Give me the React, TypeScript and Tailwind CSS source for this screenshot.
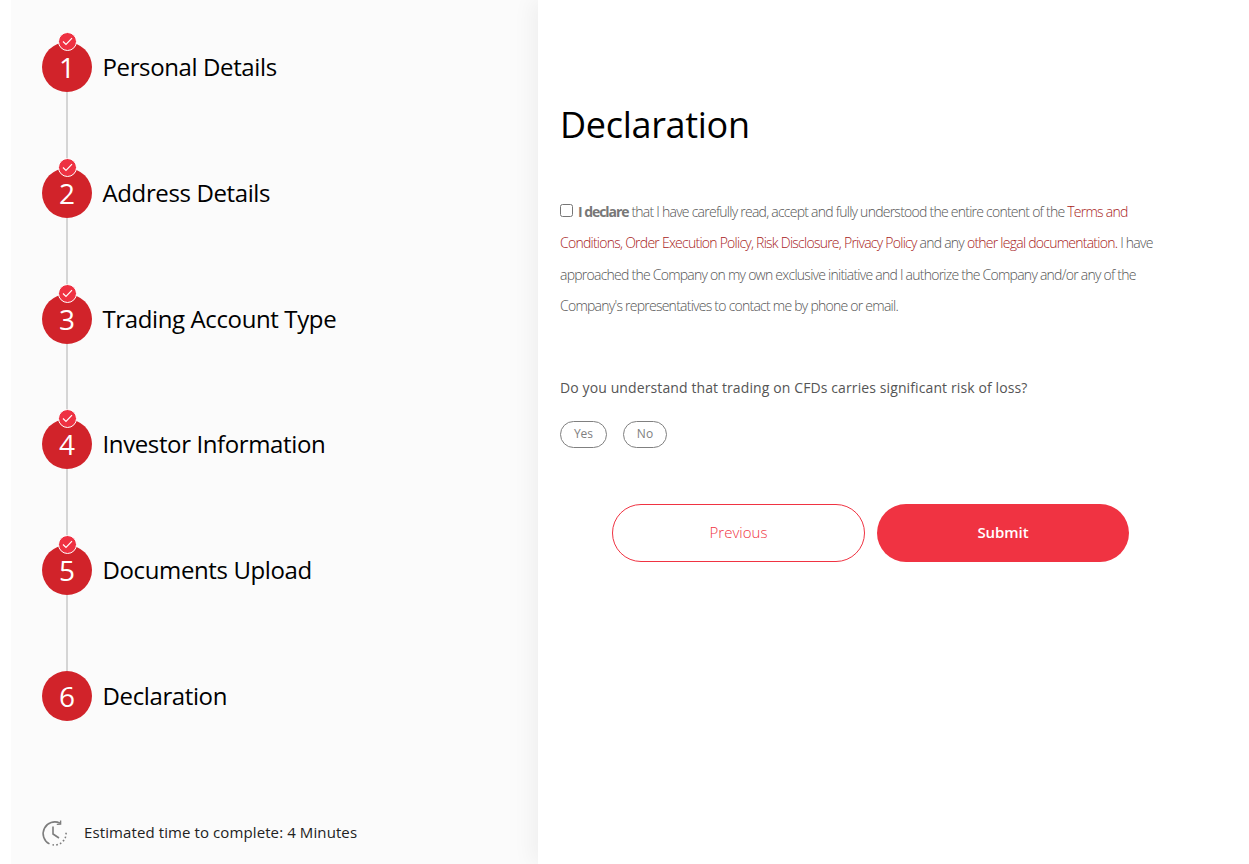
import React from "react";

const steps = [
  { n: 1, label: "Personal Details", done: true },
  { n: 2, label: "Address Details", done: true },
  { n: 3, label: "Trading Account Type", done: true },
  { n: 4, label: "Investor Information", done: true },
  { n: 5, label: "Documents Upload", done: true },
  { n: 6, label: "Declaration", done: false },
];

function Check() {
  return (
    <span className="absolute left-[16px] top-[-10px] flex h-[19px] w-[19px] items-center justify-center rounded-full border border-white bg-[#ee3142]">
      <svg width="11" height="9" viewBox="0 0 11 9" fill="none">
        <path d="M1 4.5 L4 7.5 L10 1.2" stroke="#fff" strokeWidth="1.2" />
      </svg>
    </span>
  );
}

function Clock() {
  return (
    <svg width="28" height="28" viewBox="0 0 28 28" fill="none" stroke="#7d7d7d">
      <path d="M20 4.2 A11.5 11.5 0 1 0 9.5 24.9" strokeWidth="1.6" />
      <path d="M20.6 1.5 L20.6 5.2 L16.8 5.4" strokeWidth="1.4" />
      <path d="M13 7.5 V15 L19 19" strokeWidth="1.6" />
      <path d="M12.5 25.8 A11.5 11.5 0 0 0 25.8 12" strokeWidth="1.6" strokeDasharray="1.6 2.2" />
    </svg>
  );
}

export default function App() {
  return (
    <div className="flex h-[864px] overflow-hidden bg-white font-['Open_Sans',sans-serif]">
      <aside className="ml-[11px] flex w-[527px] shrink-0 flex-col bg-[#fbfbfb] pl-[31px] pt-[42px]">
        <div className="flex flex-col">
          {steps.map((s, i) => (
            <div key={s.n} className="flex flex-col">
              <div className="flex h-[50px] items-center">
                <div className="relative flex h-[50px] w-[50px] items-center justify-center rounded-full bg-[#d1232a] text-[28px] leading-none text-white">
                  {s.n}
                  {s.done && <Check />}
                </div>
                <span className="ml-[10.5px] text-[24px] leading-none tracking-[-0.38px] text-black">{s.label}</span>
              </div>
              {i < steps.length - 1 && <div className="ml-[24px] h-[75.8px] w-[2px] bg-[#d5d5d5]" />}
            </div>
          ))}
        </div>
        <div className="mt-[98px] flex items-center">
          <span className="-ml-[2px]"><Clock /></span>
          <span className="ml-[16px] text-[15px] leading-none tracking-[0.1px] text-[#222]">Estimated time to complete: 4 Minutes</span>
        </div>
      </aside>
      <main className="relative flex-1 bg-white pl-[22px] pt-[101px] shadow-[-6px_0_20px_rgba(0,0,0,0.05)]">
        <h1 className="text-[36px] font-normal leading-[48px] tracking-[-0.3px] text-black">Declaration</h1>
        <p className="mt-[47px] w-[600px] text-[14px] font-light leading-[31.4px] tracking-[-0.75px] text-[#555]">
          <input type="checkbox" className="mr-[5px] h-[13px] w-[13px] align-[0px]" />
          <b className="font-bold tracking-[-1.05px] text-[#777]">I declare</b> that I have carefully read, accept and fully understood the entire content of the{" "}
          <span className="text-[#a81c22]">Terms and Conditions, Order Execution Policy, Risk Disclosure, Privacy Policy</span> and any{" "}
          <span className="text-[#a81c22]">other legal documentation.</span> I have approached the Company on my own exclusive initiative and I authorize the Company and/or any of the Company's representatives to contact me by phone or email.
        </p>
        <p className="mt-[56px] text-[14px] leading-[20px] tracking-[0.11px] text-[#555]">Do you understand that trading on CFDs carries significant risk of loss?</p>
        <div className="mt-[23px] flex gap-[16px]">
          <button className="flex h-[27px] w-[47px] items-center justify-center rounded-full border border-[#808080] text-[12px] text-[#808080]">Yes</button>
          <button className="flex h-[27px] w-[44px] items-center justify-center rounded-full border border-[#808080] text-[12px] text-[#808080]">No</button>
        </div>
        <div className="ml-[52px] mt-[56px] flex gap-[12px]">
          <button className="h-[58px] w-[253px] rounded-full border border-[#f03342] bg-white text-[15px] font-[350] tracking-[0.02px] text-[#f03342]">Previous</button>
          <button className="h-[58px] w-[252px] rounded-full bg-[#f03342] text-[15px] font-[550] tracking-[-0.05px] text-white">Submit</button>
        </div>
      </main>
    </div>
  );
}
